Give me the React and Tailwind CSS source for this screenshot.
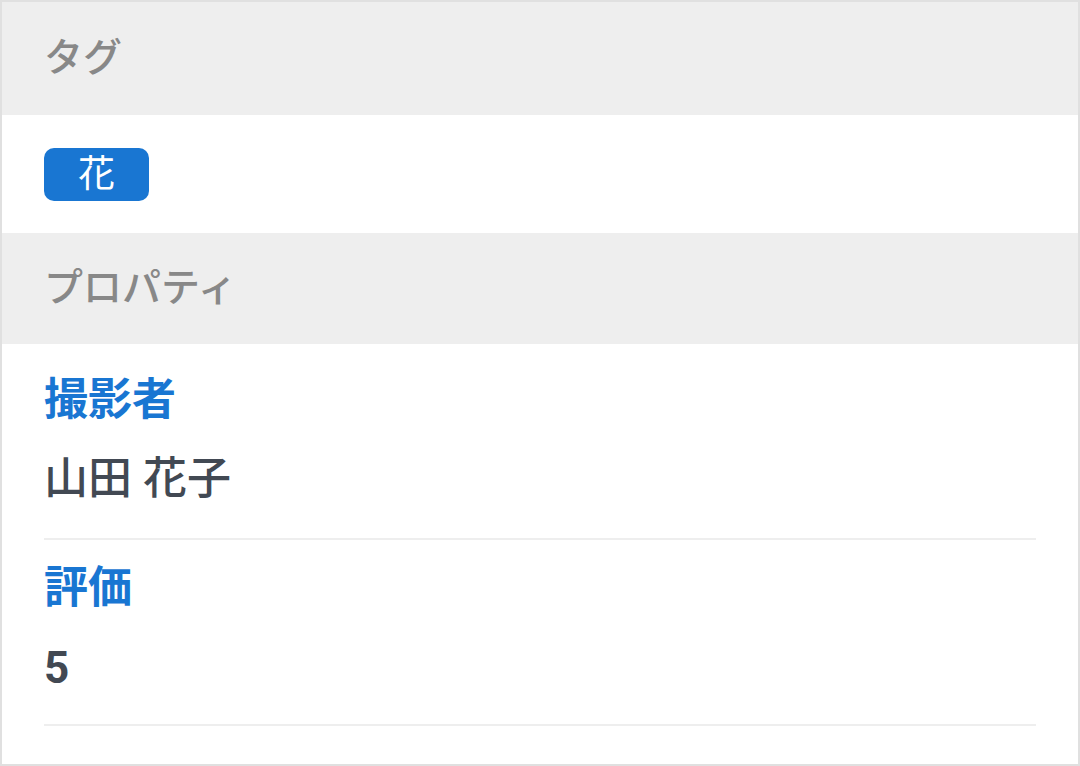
export default function App() {
  const font = { fontFamily: 'Roboto, "Noto Sans CJK JP", sans-serif' };
  return (
    <div className="w-[1080px] h-[766px] border-2 border-[#e0e0e0] bg-white box-border flex flex-col" style={font}>
      <div className="h-[113px] shrink-0 bg-[#eeeeee] flex items-center px-[42px]">
        <span className="text-[39px] font-medium text-[#888888] leading-none">タグ</span>
      </div>
      <div className="h-[118px] shrink-0 flex items-center px-[42px]">
        <span className="w-[105px] h-[53px] rounded-[10px] bg-[#1976d2] text-white text-[37px] leading-none flex items-center justify-center">花</span>
      </div>
      <div className="h-[111px] shrink-0 bg-[#eeeeee] flex items-center px-[42px]">
        <span className="text-[39px] font-medium text-[#888888] leading-none">プロパティ</span>
      </div>
      <div className="px-[42px] flex flex-col">
        <div className="border-b-2 border-[#eeeeee] pt-[30px] pb-[33px] flex flex-col gap-[27px]">
          <div className="text-[44px] leading-[52px] font-bold text-[#1976d2]">撮影者</div>
          <div className="text-[44px] leading-[52px] font-medium text-[#424953]">山田 花子</div>
        </div>
        <div className="border-b-2 border-[#eeeeee] pt-[22px] pb-[30px] flex flex-col gap-[28px]">
          <div className="text-[44px] leading-[52px] font-bold text-[#1976d2]">評価</div>
          <div className="text-[44px] leading-[52px] font-bold text-[#424953]">5</div>
        </div>
      </div>
    </div>
  );
}
